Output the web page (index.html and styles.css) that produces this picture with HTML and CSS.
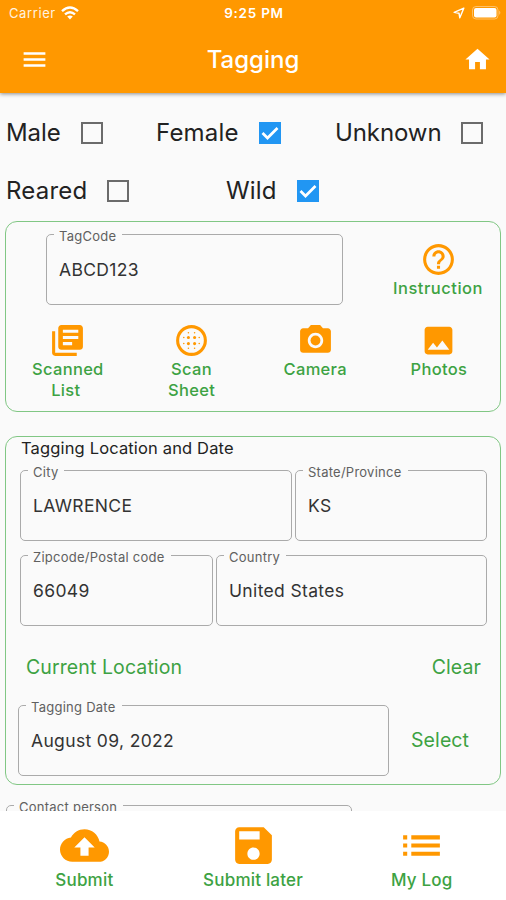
FILE: index.html
```html
<!DOCTYPE html>
<html lang="en">
<head>
<meta charset="utf-8">
<title>Tagging</title>
<link rel="stylesheet" href="styles.css">
</head>
<body>
<div class="app">
  <header class="header">
    <div class="status">
      <div class="carrier"><span>Carrier</span>
        <svg class="wifi" viewBox="0 0 18 14"><g fill="none" stroke="currentColor" stroke-width="2.4"><path d="M1 5.2Q9-2 17 5.2"/><path d="M4 8.4Q9 4 14 8.4"/></g><path d="M9 13.4L6.2 10.5Q9 8.6 11.8 10.5z" fill="currentColor"/></svg>
      </div>
      <div class="time">9:25 PM</div>
      <div class="indicators">
        <svg class="arrow" viewBox="0 0 12 12"><path d="M10.8 1.2L1.2 5.4 6 6.2 6.8 10.8z" fill="none" stroke="currentColor" stroke-width="1.4" stroke-linejoin="round"/></svg>
        <svg class="battery" viewBox="0 0 30 14"><rect x=".5" y=".5" width="25.500" height="12.500" rx="3.500" fill="none" stroke="currentColor" stroke-opacity=".4"/><rect x="2" y="2" width="22.500" height="9.500" rx="2" fill="currentColor"/><path d="M27.300 4.500q2 2.200 0 4.500z" fill="currentColor" fill-opacity=".5"/></svg>
      </div>
    </div>
    <div class="navbar">
      <svg class="nav-icon" viewBox="0 0 24 24"><path d="M3 18h18v-2H3v2zm0-5h18v-2H3v2zm0-7v2h18V6H3z"/></svg>
      <h1 class="title">Tagging</h1>
      <svg class="nav-icon" viewBox="0 0 24 24"><path d="M10 20v-6h4v6h5v-8h3L12 3 2 12h3v8z"/></svg>
    </div>
  </header>

  <main class="content">
    <div class="checks checks-sex">
      <div class="check tight"><span>Male</span><svg class="box" viewBox="0 0 22 22"><rect x="1" y="1" width="20" height="20"/></svg></div>
      <div class="check"><span>Female</span><svg class="box on" viewBox="0 0 22 22"><rect width="22" height="22"/><path d="M3.500 11l5 5L18.500 6"/></svg></div>
      <div class="check tight"><span>Unknown</span><svg class="box" viewBox="0 0 22 22"><rect x="1" y="1" width="20" height="20"/></svg></div>
    </div>
    <div class="checks checks-origin">
      <div class="check"><span>Reared</span><svg class="box" viewBox="0 0 22 22"><rect x="1" y="1" width="20" height="20"/></svg></div>
      <div class="check"><span>Wild</span><svg class="box on" viewBox="0 0 22 22"><rect width="22" height="22"/><path d="M3.500 11l5 5L18.500 6"/></svg></div>
    </div>

    <section class="card tag-card">
      <div class="tag-top">
        <fieldset class="field tagcode"><legend>TagCode</legend><span>ABCD123</span></fieldset>
        <div class="action instruction">
          <svg viewBox="0 0 24 24"><path d="M11 18h2v-2h-2v2zm1-16C6.480 2 2 6.480 2 12s4.480 10 10 10 10-4.480 10-10S17.520 2 12 2zm0 18c-4.410 0-8-3.590-8-8s3.590-8 8-8 8 3.590 8 8-3.590 8-8 8zm0-14c-2.210 0-4 1.790-4 4h2c0-1.100.9-2 2-2s2 .9 2 2c0 2-3 1.750-3 5h2c0-2.250 3-2.500 3-5 0-2.210-1.790-4-4-4z"/></svg>
          <span>Instruction</span>
        </div>
      </div>
      <div class="tag-actions">
        <div class="action">
          <svg viewBox="0 0 24 24"><path d="M4 6H2v14c0 1.100.9 2 2 2h14v-2H4V6zm16-4H8c-1.100 0-2 .9-2 2v12c0 1.100.9 2 2 2h12c1.100 0 2-.9 2-2V4c0-1.100-.9-2-2-2zm-1 9H9V9h10v2zm-4 4H9v-2h6v2zm4-8H9V5h10v2z"/></svg>
          <span>Scanned<br><span class="second">List</span></span>
        </div>
        <div class="action">
          <svg viewBox="0 0 24 24"><circle cx="12" cy="12" r="9" fill="none" stroke="currentColor" stroke-width="2"/><g><circle cx="10" cy="10" r="1"/><circle cx="14" cy="10" r="1"/><circle cx="10" cy="14" r="1"/><circle cx="14" cy="14" r="1"/><circle cx="10" cy="7" r=".5"/><circle cx="14" cy="7" r=".5"/><circle cx="10" cy="17" r=".5"/><circle cx="14" cy="17" r=".5"/><circle cx="7" cy="10" r=".5"/><circle cx="7" cy="14" r=".5"/><circle cx="17" cy="10" r=".5"/><circle cx="17" cy="14" r=".5"/></g></svg>
          <span>Scan<br>Sheet</span>
        </div>
        <div class="action">
          <svg viewBox="0 0 24 24"><circle cx="12" cy="12" r="3.200"/><path d="M9 2L7.170 4H4c-1.100 0-2 .9-2 2v12c0 1.100.9 2 2 2h16c1.100 0 2-.9 2-2V6c0-1.100-.9-2-2-2h-3.170L15 2H9zm3 15c-2.760 0-5-2.240-5-5s2.240-5 5-5 5 2.240 5 5-2.240 5-5 5z"/></svg>
          <span>Camera</span>
        </div>
        <div class="action">
          <svg viewBox="0 0 24 24"><path d="M21 19V5c0-1.100-.9-2-2-2H5c-1.100 0-2 .9-2 2v14c0 1.100.9 2 2 2h14c1.100 0 2-.9 2-2zM8.500 13.500l2.500 3.010L14.500 12l4.500 6H5l3.500-4.500z"/></svg>
          <span>Photos</span>
        </div>
      </div>
    </section>

    <section class="card place-card">
      <h2 class="card-title">Tagging Location and Date</h2>
      <div class="fields">
        <fieldset class="field city"><legend>City</legend><span>LAWRENCE</span></fieldset>
        <fieldset class="field state"><legend>State/Province</legend><span>KS</span></fieldset>
      </div>
      <div class="fields">
        <fieldset class="field zip"><legend>Zipcode/Postal code</legend><span>66049</span></fieldset>
        <fieldset class="field country"><legend>Country</legend><span>United States</span></fieldset>
      </div>
      <div class="links"><a class="link">Current Location</a><a class="link">Clear</a></div>
      <div class="date-row">
        <fieldset class="field date"><legend>Tagging Date</legend><span>August 09, 2022</span></fieldset>
        <a class="link select">Select</a>
      </div>
    </section>

    <fieldset class="field contact"><legend>Contact person</legend></fieldset>
  </main>

  <nav class="bottom">
    <div class="tab"><svg viewBox="0 0 24 24"><path d="M19.350 10.040C18.670 6.590 15.640 4 12 4 9.110 4 6.600 5.640 5.350 8.040 2.340 8.360 0 10.910 0 14c0 3.310 2.690 6 6 6h13c2.760 0 5-2.240 5-5 0-2.640-2.050-4.780-4.650-4.960zM14 13v4h-4v-4H7l5-5 5 5h-3z"/></svg><span>Submit</span></div>
    <div class="tab"><svg viewBox="0 0 24 24"><path d="M17 3H5c-1.110 0-2 .9-2 2v14c0 1.100.89 2 2 2h14c1.100 0 2-.9 2-2V7l-4-4zm-5 16c-1.660 0-3-1.340-3-3s1.340-3 3-3 3 1.340 3 3-1.340 3-3 3zm3-10H5V5h10v4z"/></svg><span>Submit later</span></div>
    <div class="tab"><svg viewBox="0 0 24 24"><path d="M3 13h2v-2H3v2zm0 4h2v-2H3v2zm0-8h2V7H3v2zm4 4h14v-2H7v2zm0 4h14v-2H7v2zM7 7v2h14V7H7z"/></svg><span>My Log</span></div>
  </nav>
</div>
</body>
</html>
```
FILE: styles.css
```css
* { box-sizing: border-box; }

body {
  margin: 0;
  font-family: Inter, "Liberation Sans", sans-serif;
  background: #fafafa;
  color: #222;
}

svg { display: block; fill: currentColor; flex: none; }

.app { height: 900px; display: flex; flex-direction: column; overflow: hidden; }

.header {
  height: 93px;
  flex: none;
  background: #ff9800;
  color: #fff;
  box-shadow: 0 1px 4px rgba(0, 0, 0, .45);
}

.status {
  height: 26px;
  padding: 0 7px 0 9px;
  display: grid;
  grid-template-columns: 1fr auto 1fr;
  align-items: center;
  font-size: 13px;
  line-height: 26px;
}
.carrier { display: flex; align-items: center; gap: 5px; letter-spacing: .6px; color: #fff3e0; }
.wifi { width: 18px; height: 14px; color: #fff; }
.time { font-size: 13.500px; font-weight: 600; letter-spacing: .75px; }
.indicators { display: flex; justify-content: flex-end; align-items: center; gap: 7px; margin-right: -3px; }
.arrow { width: 12px; height: 12px; }
.battery { width: 30px; height: 14px; }

.navbar {
  height: 67px;
  padding: 0 14px 0 20px;
  display: grid;
  grid-template-columns: 29px 1fr 29px;
  align-items: center;
}
.nav-icon { width: 29px; height: 29px; }
.title { margin: 0 6px 0 0; font-size: 24px; font-weight: 500; line-height: 30px; text-align: center; }

.content { flex: 1; min-height: 0; overflow: hidden; padding: 10px 5px 0; }

.checks { display: grid; height: 59px; padding-left: 1px; align-items: center; }
.checks-sex { grid-template-columns: 150px 179px 1fr; }
.checks-origin { grid-template-columns: 220px 1fr; height: 58px; }
.check { display: flex; align-items: center; gap: 20px; font-size: 24px; line-height: 30px; letter-spacing: .2px; }
.check.tight { letter-spacing: -.1px; }
.box { width: 22px; height: 22px; fill: none; stroke: #6b6b6b; stroke-width: 2; }
.box.on rect { fill: #2196f3; stroke: none; }
.box.on path { stroke: #fff; stroke-width: 2.700; }

.card { width: 496px; border: 1px solid #81c784; border-radius: 12px; }
.tag-card { height: 191px; padding: 12px 0 0; margin-top: .5px; }

.field {
  margin: 0;
  padding: 0 0 0 12px;
  min-width: 0;
  height: 71px;
  border: 1px solid #aaa;
  border-radius: 5px;
  font-size: 17.500px;
  color: #333;
}
.field legend {
  margin-left: -5px;
  padding: 2px 6px 0 5px;
  font-size: 13px;
  line-height: 0;
  letter-spacing: .25px;
  color: #606060;
}
.field span { display: block; line-height: 22px; padding-top: 23px; letter-spacing: .35px; }

.tag-top { display: flex; padding-left: 40px; }
.tagcode { width: 297px; }
.action {
  display: flex;
  flex-direction: column;
  align-items: center;
  color: #ff9800;
}
.action svg { width: 37px; height: 37px; }
.action > span { color: #3da243; font-size: 16.500px; line-height: 21px; font-weight: 500; letter-spacing: .3px; text-align: center; }
.instruction { width: 120px; margin-left: 35px; padding-top: 7px; }
.instruction > span { letter-spacing: .5px; }
.tag-actions { display: grid; grid-template-columns: repeat(4, 123.700px); margin-top: 17px; }
.second { margin-right: 4px; }

.place-card { height: 349px; margin-top: 24px; padding: 1px 0 0 14px; }
.card-title { margin: 0 0 12px 1px; font-size: 16.500px; line-height: 20px; font-weight: 400; letter-spacing: .15px; }
.fields { display: flex; gap: 3px; margin-bottom: 14px; }
.city { width: 272px; }
.state { width: 192px; }
.zip { width: 193px; }
.country { width: 271px; }
.links { display: flex; justify-content: space-between; padding: 14px 19px 0 6px; height: 65px; }
.link { color: #3da243; font-size: 19.500px; line-height: 26px; letter-spacing: .1px; }
.date-row { display: flex; align-items: center; gap: 22px; margin-left: -2px; }
.date { width: 371px; }

.contact { width: 346px; margin: 20px 0 0 1px; }

.bottom {
  height: 89px;
  flex: none;
  background: #fff;
  display: grid;
  grid-template-columns: repeat(3, 168.700px);
  padding-top: 10px;
}
.tab { display: flex; flex-direction: column; align-items: center; color: #ff9800; }
.tab svg { width: 49px; height: 49px; }
.tab span { color: #3da243; font-size: 17px; line-height: 20px; font-weight: 500; letter-spacing: .2px; }
```
